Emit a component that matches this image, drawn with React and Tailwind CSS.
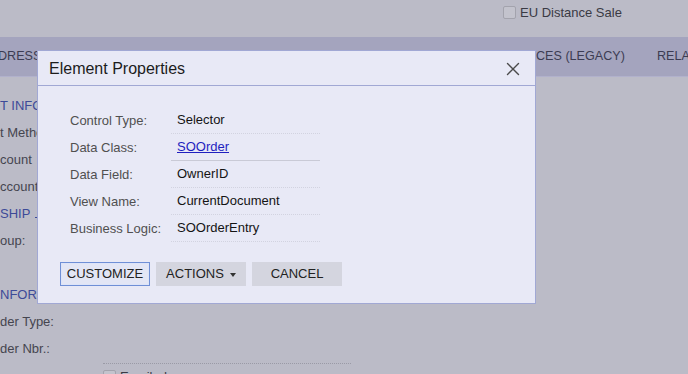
import { X } from 'lucide-react'

const pageRows = [
  { text: 'T INFORMATION', heading: true },
  { text: 't Method' },
  { text: 'count' },
  { text: 'ccount:' },
  { text: 'SHIP', heading: true, line: true },
  { text: 'oup:' },
  { text: '' },
  { text: 'NFORMATION', heading: true },
  { text: 'der Type:' },
  { text: 'der Nbr.:' },
]

const properties = [
  { label: 'Control Type:', value: 'Selector' },
  { label: 'Data Class:', value: 'SOOrder', link: true },
  { label: 'Data Field:', value: 'OwnerID' },
  { label: 'View Name:', value: 'CurrentDocument' },
  { label: 'Business Logic:', value: 'SOOrderEntry' },
]

function PageBehind() {
  return (
    <div className="h-[374px] w-[688px] overflow-hidden bg-[#bbbbc7]">
      <div className="flex h-[37px] items-start pl-[503px] pt-[6px]">
        <span className="h-[13px] w-[13px] rounded-[2px] border border-[#a3a3ad] bg-[#c3c3cd]" />
        <span className="ml-[4px] text-[13px] leading-[13px] text-[#3a3a44]">EU Distance Sale</span>
      </div>

      <div className="flex h-[40px] items-center whitespace-nowrap border-b border-[#b1b1cc] bg-[#a4a4be] text-[12.6px] text-[#3c3c52]">
        <span className="-ml-[2px] w-[538px] shrink-0">DRESS</span>
        <span className="w-[121px] shrink-0">CES (LEGACY)</span>
        <span className="shrink-0">RELATIONS</span>
      </div>

      <div className="pt-[15px]">
        {pageRows.map((row, i) => (
          <div key={i} className="flex h-[27px] items-center whitespace-nowrap text-[13px]">
            <span className={row.heading ? 'text-[#3d4a98]' : 'text-[#45454f]'}>{row.text}</span>
            {row.line && <span className="ml-[5px] mt-[8px] h-px w-[60px] bg-[#3d4a98]" />}
          </div>
        ))}
        <div className="ml-[103px] mt-[1px] w-[248px] border-b border-dotted border-[#9a9aa6]" />
        <div className="ml-[103px] mt-[3px] flex items-center gap-[4px] text-[13px] text-[#3a3a44]">
          <span className="h-[13px] w-[13px] rounded-[2px] border border-[#a3a3ad] bg-[#c3c3cd]" />
          <span>Emailed</span>
        </div>
      </div>
    </div>
  )
}

function PropertiesDialog() {
  return (
    <div className="absolute left-[37px] top-[50px] h-[254px] w-[499px] border border-[#a1a8d4] bg-[#e8e9f6]">
      <div className="flex h-[35px] items-center justify-between border-b border-[#a1a8d4] pl-[11px] pr-[11px]">
        <span className="mt-[1px] text-[16px] text-[#1c1c1c]">Element Properties</span>
        <X size={22} strokeWidth={1.5} className="mt-[2px] text-[#4b4b4b]" />
      </div>

      <div className="pl-[32px] pt-[21px]">
        {properties.map((p) => (
          <div key={p.label} className="flex h-[27px] items-center text-[13px]">
            <span className="w-[101px] text-[#505050]">{p.label}</span>
            <span
              className={
                'flex h-full w-[149px] items-center px-[6px] ' +
                (p.link ? 'border-b border-[#c9cad6]' : 'border-b border-dotted border-[#d2d3e0]')
              }
            >
              {p.link ? (
                <span className="text-[#1f1fbf] underline">{p.value}</span>
              ) : (
                <span className="text-[#141414]">{p.value}</span>
              )}
            </span>
          </div>
        ))}
      </div>

      <div className="mt-[20px] flex gap-[6px] pl-[22px] text-[13px] text-[#222]">
        <button className="h-[24px] w-[90px] border border-[#6f8fd6] bg-[#e3e6f5] shadow-[inset_0_0_0_1px_#dde4f8]">
          CUSTOMIZE
        </button>
        <button className="flex h-[24px] w-[90px] items-center justify-center gap-[6px] bg-[#d4d5df]">
          ACTIONS
          <span className="mt-[1px] h-0 w-0 border-x-[3.5px] border-t-[4px] border-x-transparent border-t-[#333]" />
        </button>
        <button className="h-[24px] w-[90px] bg-[#d4d5df]">CANCEL</button>
      </div>
    </div>
  )
}

export default function App() {
  return (
    <div className="relative h-[374px] w-[688px] overflow-hidden font-['Liberation_Sans',Arial,sans-serif]">
      <PageBehind />
      <PropertiesDialog />
    </div>
  )
}
